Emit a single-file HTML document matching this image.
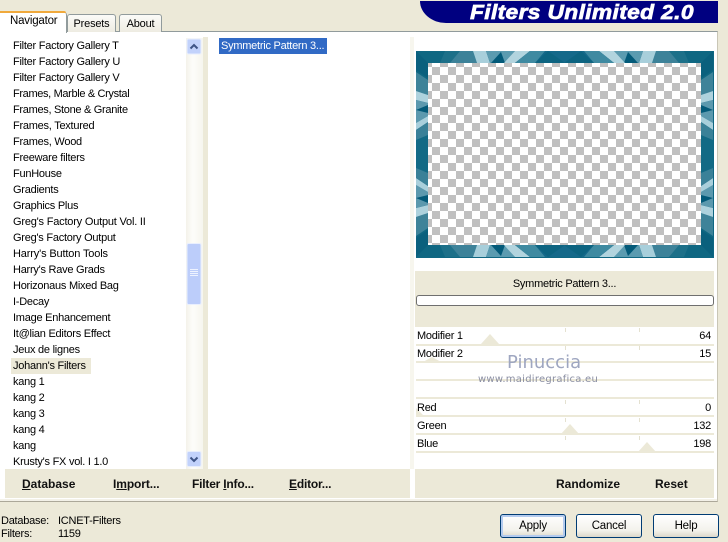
<!DOCTYPE html>
<html><head><meta charset="utf-8">
<style>
html,body{margin:0;padding:0}
body{width:728px;height:541px;overflow:hidden;background:#ece9d8;position:relative;font-family:"Liberation Sans",sans-serif;font-size:11px;color:#000}
.a{position:absolute}
.t{position:absolute;white-space:nowrap;font-size:11px;line-height:16px;letter-spacing:-.25px;margin-top:1px}
.b{position:absolute;white-space:nowrap;font-size:12px;line-height:16px;font-weight:bold;color:#111}
.tab{position:absolute;box-sizing:border-box;background:linear-gradient(#fbfbf8,#eeece2);border:1px solid #919b9c;border-bottom:none;border-radius:3px 3px 0 0;text-align:center;line-height:18px;font-size:11px;letter-spacing:-.2px}
.btn{position:absolute;box-sizing:border-box;width:66px;height:24px;top:514px;border:1px solid #003c74;border-radius:3px;background:linear-gradient(#fff,#f3f2ec 70%,#dcd8ca);text-align:center;line-height:22px;font-size:11.5px;letter-spacing:-.2px}
.row{position:absolute;left:416px;width:298px;height:2px;background:#ece9d8}
.tick{position:absolute;width:1px;height:4px;background:#e4e1d0}
</style></head><body>

<div class="a" style="left:0;top:31px;width:718px;height:471px;background:#fff;border-top:1px solid #919b9c;border-right:1px solid #c9c6b6;border-bottom:1px solid #aca899;box-sizing:border-box"></div>
<div class="a" style="left:0;top:499px;width:717px;height:2px;background:#f3f1e8"></div>

<div class="tab" style="left:67px;top:14px;width:49px;height:18px">Presets</div>
<div class="tab" style="left:119px;top:14px;width:43px;height:18px">About</div>
<div class="a" style="left:0;top:12px;width:67px;height:21px;background:#fff;border-right:1px solid #919b9c;box-sizing:border-box;border-radius:0 3px 0 0"></div>
<div class="a" style="left:0;top:11px;width:66px;height:2px;background:#f0a93c;border-radius:0 3px 0 0"></div>
<div class="a" style="left:10px;top:13px;font-size:11.5px;line-height:16px;letter-spacing:-.2px">Navigator</div>

<!-- logo -->
<div class="a" style="left:420px;top:1px;width:298px;height:22px;background:#000080;border-radius:0 0 0 26px/0 0 0 22px"></div>
<div class="a" style="left:470px;top:2px;color:#fff;font-size:20px;line-height:22px;font-weight:bold;font-style:italic;letter-spacing:.3px;-webkit-text-stroke:.7px #fff;white-space:nowrap;transform:scaleX(1.14);transform-origin:0 0">Filters Unlimited 2.0</div>

<!-- list -->
<div class="a" style="left:11px;top:358px;width:80px;height:16px;background:#ece9d8"></div>
<div class="t" style="left:13px;top:37px">Filter Factory Gallery T</div>
<div class="t" style="left:13px;top:53px">Filter Factory Gallery U</div>
<div class="t" style="left:13px;top:69px">Filter Factory Gallery V</div>
<div class="t" style="left:13px;top:85px;letter-spacing:-.35px">Frames, Marble &amp; Crystal</div>
<div class="t" style="left:13px;top:101px;letter-spacing:-.3px">Frames, Stone &amp; Granite</div>
<div class="t" style="left:13px;top:117px">Frames, Textured</div>
<div class="t" style="left:13px;top:133px">Frames, Wood</div>
<div class="t" style="left:13px;top:149px">Freeware filters</div>
<div class="t" style="left:13px;top:165px">FunHouse</div>
<div class="t" style="left:13px;top:181px">Gradients</div>
<div class="t" style="left:13px;top:197px">Graphics Plus</div>
<div class="t" style="left:13px;top:213px;letter-spacing:-.2px">Greg's Factory Output Vol. II</div>
<div class="t" style="left:13px;top:229px">Greg's Factory Output</div>
<div class="t" style="left:13px;top:245px;letter-spacing:-.15px">Harry's Button Tools</div>
<div class="t" style="left:13px;top:261px">Harry's Rave Grads</div>
<div class="t" style="left:13px;top:277px">Horizonaus Mixed Bag</div>
<div class="t" style="left:13px;top:293px">I-Decay</div>
<div class="t" style="left:13px;top:309px">Image Enhancement</div>
<div class="t" style="left:13px;top:325px">It@lian Editors Effect</div>
<div class="t" style="left:13px;top:341px">Jeux de lignes</div>
<div class="t" style="left:13px;top:357px">Johann's Filters</div>
<div class="t" style="left:13px;top:373px">kang 1</div>
<div class="t" style="left:13px;top:389px">kang 2</div>
<div class="t" style="left:13px;top:405px">kang 3</div>
<div class="t" style="left:13px;top:421px">kang 4</div>
<div class="t" style="left:13px;top:437px">kang</div>
<div class="t" style="left:13px;top:453px">Krusty's FX vol. I 1.0</div>

<!-- scrollbar -->
<div class="a" style="left:186px;top:38px;width:17px;height:431px;background:linear-gradient(90deg,#f4f2ea,#fdfdfa 40%,#f6f5ee)"></div>
<div class="a" style="left:203px;top:37px;width:5px;height:432px;background:#ece9d8"></div>
<svg class="a" style="left:186px;top:38px" width="17" height="431" viewBox="0 0 17 431">
<rect x="1" y="1" width="14" height="15" rx="1.5" fill="#c2d2fb" stroke="#e8eefc"/>
<path d="M4.5 10.5L8 7l3.500 3.500" fill="none" stroke="#3e5486" stroke-width="2"/>
<rect x="1" y="205.500" width="14" height="61" rx="1.500" fill="#bccdfa" stroke="#e9effe"/>
<path d="M4 231.500h8M4 233.500h8M4 235.500h8M4 237.500h8" stroke="#eef3ff" stroke-width="1"/>
<rect x="1" y="413.500" width="14" height="15" rx="1.500" fill="#c2d2fb" stroke="#e8eefc"/>
<path d="M4.500 419.500L8 423l3.500-3.500" fill="none" stroke="#3e5486" stroke-width="2"/>
</svg>

<!-- middle -->
<div class="a" style="left:219px;top:38px;width:108px;height:16px;background:#316ac5"></div>
<div class="t" style="left:221px;top:37px;color:#fff">Symmetric Pattern 3...</div>
<div class="a" style="left:410px;top:37px;width:4px;height:432px;background:#f7f6ee"></div>

<!-- preview -->
<svg class="a" style="left:416px;top:51px" width="298" height="207" viewBox="416 51 298 207">
<defs>
<pattern id="ck" x="432" y="67" width="16" height="16" patternUnits="userSpaceOnUse">
<rect x="0" y="0" width="16" height="16" fill="#fff"/>
<rect x="0" y="0" width="8" height="8" fill="#c0c0c0"/>
<rect x="8" y="8" width="8" height="8" fill="#c0c0c0"/>
</pattern>
<g id="q">
<polygon points="416,51 473,51 477,63 428,63 428,91 416,91" fill="#0f6782"/>
<polygon points="445,51 462,51 452,63 440,63" fill="#1d7089"/>
<polygon points="460,51 473,51 477,63 450,63" fill="#3d8299"/>
<polygon points="416,51 428,63 428,78 416,70" fill="#0a607d"/>
<polygon points="416,72 428,80 428,95 416,91" fill="#3e8399"/>
<polygon points="473,51 486,51 490,63 477,63" fill="#a8cfdb"/>
<polygon points="486,51 515,51 505,63 490,63" fill="#5b9bb0"/>
<polygon points="501,52 505,63 491,63" fill="#035a79"/>
<polygon points="515,51 530,51 515,63 504,63" fill="#b2d4de"/>
<polygon points="530,51 565,51 565,63 515,63" fill="#15698a"/>
<polygon points="530,51 545,51 535,63 515,63" fill="#3f8aa1"/>
<polygon points="548,51 565,63 535,63" fill="#0d6481"/>
<polygon points="416,91 428,95 428,103 416,100" fill="#aed2dd"/>
<polygon points="416,100 428,103 428,116 416,123" fill="#5c99ae"/>
<polygon points="416,110 428,105 428,113" fill="#035a79"/>
<polygon points="416,123 428,116 428,122 416,130" fill="#a9cfdb"/>
<polygon points="416,130 428,122 428,155 416,155" fill="#3a8198"/>
<polygon points="416,140 428,135 428,155 416,155" fill="#126a85"/>
</g>
</defs>
<rect x="416" y="51" width="298" height="207" fill="#0f6782"/>
<use href="#q"/>
<use href="#q" transform="translate(1129 0) scale(-1 1)"/>
<use href="#q" transform="translate(0 308) scale(1 -1)"/>
<use href="#q" transform="translate(1129 308) scale(-1 -1)"/>
<rect x="428" y="63" width="273" height="182" fill="url(#ck)"/>
</svg>

<!-- right panel -->
<div class="a" style="left:415px;top:271px;width:299px;height:56px;background:#ece9d8"></div>
<div class="a" style="left:415px;top:276px;width:299px;text-align:center;line-height:16px;letter-spacing:-.25px;font-size:11px">Symmetric Pattern 3...</div>
<div class="a" style="left:416px;top:295px;width:298px;height:11px;box-sizing:border-box;background:#fff;border:1px solid #6f6f6f;border-radius:3px"></div>

<div class="row" style="top:344px"></div>
<div class="row" style="top:361px"></div>
<div class="row" style="top:379px"></div>
<div class="row" style="top:397px"></div>
<div class="row" style="top:415px"></div>
<div class="row" style="top:433px"></div>
<div class="row" style="top:451px"></div>

<div class="tick" style="left:565px;top:328px"></div><div class="tick" style="left:639px;top:328px"></div>
<div class="tick" style="left:565px;top:346px"></div><div class="tick" style="left:639px;top:346px"></div>
<div class="tick" style="left:565px;top:400px"></div><div class="tick" style="left:639px;top:400px"></div>
<div class="tick" style="left:565px;top:418px"></div><div class="tick" style="left:639px;top:418px"></div>
<div class="tick" style="left:565px;top:436px"></div><div class="tick" style="left:639px;top:436px"></div>

<svg class="a" style="left:415px;top:327px" width="300" height="130" viewBox="415 327 300 130" fill="#ece9d8">
<polygon points="481,344 490,334 499,344"/>
<polygon points="423,362 432,357 441,362"/>
<polygon points="416,416 416,408 424,416"/>
<polygon points="561,434 570,424 579,434"/>
<polygon points="638,452 647,442 656,452"/>
</svg>

<div class="t" style="left:417px;top:327px">Modifier 1</div><div class="t" style="right:17px;top:327px">64</div>
<div class="t" style="left:417px;top:345px">Modifier 2</div><div class="t" style="right:17px;top:345px">15</div>
<div class="t" style="left:417px;top:399px">Red</div><div class="t" style="right:17px;top:399px">0</div>
<div class="t" style="left:417px;top:417px">Green</div><div class="t" style="right:17px;top:417px">132</div>
<div class="t" style="left:417px;top:435px">Blue</div><div class="t" style="right:17px;top:435px">198</div>

<!-- watermark -->
<div class="a" style="left:507px;top:352px;font-size:18px;line-height:22px;color:#9ea6c0;white-space:nowrap;font-family:'DejaVu Sans',sans-serif">Pinuccia</div>
<div class="a" style="left:478px;top:373px;line-height:14px;color:#8a8ea2;letter-spacing:.25px;white-space:nowrap;font-family:'DejaVu Sans',sans-serif;font-size:10px">www.maidiregrafica.eu</div>

<!-- bottom bars -->
<div class="a" style="left:5px;top:469px;width:405px;height:29px;background:#ece9d8"></div>
<div class="a" style="left:415px;top:469px;width:299px;height:29px;background:#ece9d8"></div>
<div class="b" style="left:22px;top:476px"><u>D</u>atabase</div>
<div class="b" style="left:113px;top:476px;letter-spacing:-.1px">I<u>m</u>port...</div>
<div class="b" style="left:192px;top:476px;letter-spacing:-.2px">Filter <u>I</u>nfo...</div>
<div class="b" style="left:289px;top:476px;letter-spacing:-.2px"><u>E</u>ditor...</div>
<div class="b" style="left:556px;top:476px">Randomize</div>
<div class="b" style="left:655px;top:476px">Reset</div>

<!-- status -->
<div class="t" style="left:1px;top:512px">Database:</div>
<div class="t" style="left:58px;top:512px">ICNET-Filters</div>
<div class="t" style="left:1px;top:525px">Filters:</div>
<div class="t" style="left:58px;top:525px">1159</div>

<div class="btn" style="left:500px;box-shadow:inset 0 0 0 2px #b4cbee">Apply</div>
<div class="btn" style="left:576px">Cancel</div>
<div class="btn" style="left:653px">Help</div>
</body></html>
